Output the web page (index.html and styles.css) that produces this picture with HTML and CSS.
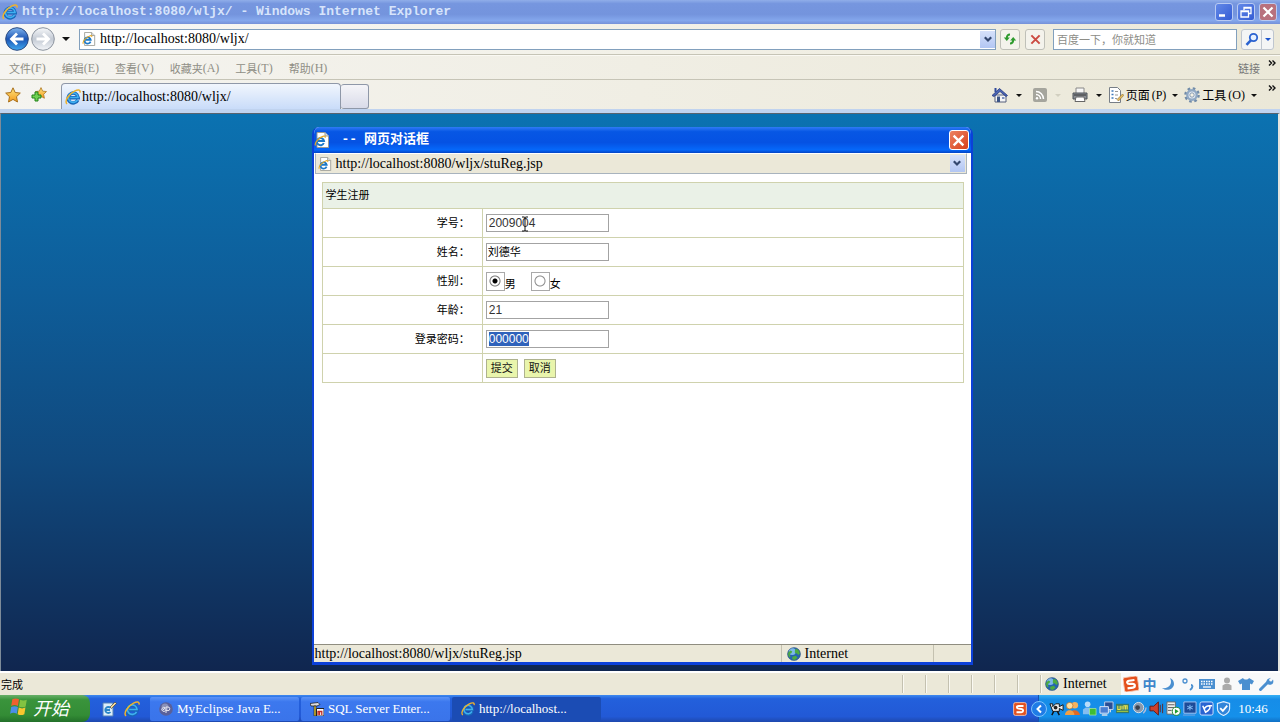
FILE: index.html
```html
<!DOCTYPE html>
<html lang="zh-CN">
<head>
<meta charset="utf-8">
<title>http://localhost:8080/wljx/ - Windows Internet Explorer</title>
<link rel="stylesheet" href="styles.css">
</head>
<body>
<svg class="defs" aria-hidden="true">
  <defs>
    <linearGradient id="gBlue" x1="0" y1="0" x2="0" y2="1"><stop offset="0" stop-color="#7fb4ee"/><stop offset=".5" stop-color="#1c55b4"/><stop offset="1" stop-color="#3fa8f0"/></linearGradient>
    <linearGradient id="gGrey" x1="0" y1="0" x2="0" y2="1"><stop offset="0" stop-color="#f6f8fa"/><stop offset=".5" stop-color="#c3cad4"/><stop offset="1" stop-color="#f4f6f9"/></linearGradient>
    <linearGradient id="gStar" x1="0" y1="0" x2="0" y2="1"><stop offset="0" stop-color="#ffe680"/><stop offset="1" stop-color="#f39a1c"/></linearGradient>
    <symbol id="ie" viewBox="0 0 16 16">
      <path d="M12.800 11A5 5 0 1 1 13.200 8.700H5" fill="none" stroke="#1766b8" stroke-width="3.400"/>
      <path d="M12.500 10.800A4.800 4.800 0 1 1 13 8.500H5.200" fill="none" stroke="#3fb0f0" stroke-width="1.700"/>
      <path d="M2 15C-1 12 4 5 9.500 2.200C13 .4 15.600.5 15 3.600" fill="none" stroke="#eeb22c" stroke-width="1.500"/>
    </symbol>
    <symbol id="iepage" viewBox="0 0 16 16">
      <path d="M3 .5h8l3.500 3.500v11.500H3z" fill="#fff" stroke="#9b9b94"/><path d="M11 .5V4h3.500" fill="#ddd" stroke="#9b9b94"/>
      <path d="M9.800 11A3.600 3.600 0 1 1 10 9H4" fill="none" stroke="#1b79c9" stroke-width="2"/>
      <path d="M1.500 13.500C0 11 5 5.500 9.500 4.200c1.500-.4 2 .4 1.500 1.500" fill="none" stroke="#e8a820" stroke-width="1.200"/>
    </symbol>
    <symbol id="globe" viewBox="0 0 16 16">
      <circle cx="8" cy="8" r="7.500" fill="#2564b0"/><circle cx="6" cy="5" r="4" fill="#7cb8ea"/>
      <path d="M1.500 6L4 4l2 1-1 2-2 1 1 3-1 1C1 10 .5 8 1.500 6zM10 2l3 1 2 4-2 2-2-2-2 0 0-3zM6 11l4-1 2 2-3 3-3-1z" fill="#4cab42"/>
      <circle cx="8" cy="8" r="7.300" fill="none" stroke="#3d5c80" stroke-width=".7"/>
    </symbol>
    <symbol id="sogou" viewBox="0 0 16 16">
      <rect x=".7" y=".7" width="14.600" height="14.600" rx="2" fill="#e4501e" stroke="#f6c9b4"/>
      <path d="M12 4.500H6.500C3.500 4.500 4 7.300 6.500 7.600l3 .4c3 .4 2.500 3.800 0 3.800H4" fill="none" stroke="#fff" stroke-width="2.200"/>
    </symbol>
    <symbol id="down" viewBox="0 0 8 4"><path d="M0 0h8L4 4z"/></symbol>
    <symbol id="chev" viewBox="0 0 8 7"><path d="M.8 1.200L4 4.500l3.200-3.300" fill="none" stroke="#33476e" stroke-width="2.200"/></symbol>
    <symbol id="more" viewBox="0 0 8 6"><path d="M1 .5L3.500 3 1 5.500M4.500.5L7 3 4.500 5.500" fill="none" stroke="#111" stroke-width="1.400"/></symbol>
    <symbol id="cross" viewBox="0 0 12 12"><path d="M1.500 1.500l9 9M10.500 1.500l-9 9" fill="none" stroke="currentColor" stroke-width="2.200"/></symbol>
    <symbol id="star" viewBox="0 0 16 16"><path d="M8 .8l2.200 4.700 5.100.6-3.800 3.600 1 5.300L8 12.400 3.500 15l1-5.300L.7 6.100l5.100-.6z" fill="url(#gStar)" stroke="#a9701a"/></symbol>
  </defs>
</svg>

<header class="titlebar">
  <svg class="i16"><use href="#ie"/></svg>
  <h1 class="titlebar-text">http://localhost:8080/wljx/ - Windows Internet Explorer</h1>
  <button class="winbtn" aria-label="最小化"><svg viewBox="0 0 12 12"><path d="M1 9.500h6" stroke="#fff" stroke-width="2.500"/></svg></button>
  <button class="winbtn" aria-label="还原"><svg viewBox="0 0 12 12"><path d="M4 4V1.500h7V7.500H8.500M4 2h7M1 5h7.500v6H1zM1 5.500h7.500" fill="none" stroke="#fff" stroke-width="1.300"/></svg></button>
  <button class="winbtn winbtn-close" aria-label="关闭"><svg><use href="#cross"/></svg></button>
</header>

<nav class="addressrow">
  <div class="navbtns">
    <button class="plain" aria-label="后退"><svg viewBox="0 0 24 24"><circle cx="12" cy="12" r="11.300" fill="url(#gBlue)" stroke="#2c4a80"/><path d="M18.500 12H7M12 6.500L6.500 12l5.500 5.500" fill="none" stroke="#fff" stroke-width="2.800"/></svg></button>
    <button class="plain" aria-label="前进"><svg viewBox="0 0 24 24"><circle cx="12" cy="12" r="11.300" fill="url(#gGrey)" stroke="#8c949f"/><path d="M5.500 12H17M12 6.500l5.500 5.500-5.500 5.500" fill="none" stroke="#fff" stroke-width="2.800"/></svg></button>
    <svg class="arrow arrow-big"><use href="#down"/></svg>
  </div>
  <div class="addressbox">
    <svg class="i14"><use href="#iepage"/></svg>
    <input class="address" aria-label="地址" value="http://localhost:8080/wljx/">
    <button class="combo" aria-label="展开"><svg><use href="#chev"/></svg></button>
  </div>
  <button class="toolbtn" aria-label="刷新"><svg viewBox="0 0 14 14"><path d="M6.500 11.500" fill="none"/><path d="M7 2.500C5 2.500 3.800 3.500 3.800 6.500M7 11.500c2 0 3.200-1 3.200-4" fill="none" stroke="#2f9b2f" stroke-width="2"/><path d="M.8 5.500h6l-3 3.500zM7.200 8.500h6l-3-3.500z" fill="#2f9b2f"/></svg></button>
  <button class="toolbtn toolbtn-stop" aria-label="停止"><svg><use href="#cross"/></svg></button>
  <input class="search" aria-label="搜索" placeholder="百度一下，你就知道">
  <div class="searchbtns">
    <button class="plain" aria-label="搜索"><svg viewBox="0 0 14 14"><circle cx="8.500" cy="5.500" r="3.700" fill="#e6f0ff" stroke="#2a62d0" stroke-width="1.800"/><path d="M6 8.200L1.500 12.800" stroke="#2a62d0" stroke-width="2.600"/></svg></button>
    <button class="plain searchmore" aria-label="搜索选项"><svg class="arrow arrow-blue"><use href="#down"/></svg></button>
  </div>
</nav>

<nav class="menurow">
  <button class="menu">文件<span>(F)</span></button>
  <button class="menu">编辑<span>(E)</span></button>
  <button class="menu">查看<span>(V)</span></button>
  <button class="menu">收藏夹<span>(A)</span></button>
  <button class="menu">工具<span>(T)</span></button>
  <button class="menu">帮助<span>(H)</span></button>
  <span class="links">链接</span>
  <svg class="more"><use href="#more"/></svg>
</nav>

<nav class="tabrow">
  <div class="favs">
    <svg class="i16"><use href="#star"/></svg>
    <svg class="i16" viewBox="0 0 16 16"><g transform="translate(4 0) scale(.75)"><path d="M8 .8l2.200 4.700 5.100.6-3.800 3.600 1 5.300L8 12.400 3.500 15l1-5.300L.7 6.100l5.100-.6z" fill="url(#gStar)" stroke="#a9701a"/></g><path d="M4 5h3v3h3v3H7v3H4v-3H1V8h3z" fill="#6fd052" stroke="#23831b"/></svg>
  </div>
  <div class="tab"><svg class="i16"><use href="#ie"/></svg>http://localhost:8080/wljx/</div>
  <button class="newtab" aria-label="新选项卡"></button>
  <div class="tools">
    <svg class="i16" viewBox="0 0 16 16"><path d="M3 8h11v7H3z" fill="#f5f5f5" stroke="#555e7c"/><path d="M0 8.500L7.500 1.500l8 7-1.500 1-6-5-6 5z" fill="#4a64b4" stroke="#243a80" stroke-width=".8"/><path d="M2.500 1h2v4h-2z" fill="#304a9c"/><path d="M5 9.500h3V15H5z" fill="#3b5486"/><path d="M10 10h2.500v2H10z" fill="#7f93c0"/></svg>
    <svg class="arrow arrow-apart"><use href="#down"/></svg>
    <svg class="i14 rss" viewBox="0 0 14 14"><rect width="14" height="14" rx="2" fill="#a5a59d"/><path d="M3 6.500A4.500 4.500 0 0 1 7.500 11M3 3.500A7.500 7.500 0 0 1 10.500 11" fill="none" stroke="#fff" stroke-width="1.500"/><circle cx="4" cy="10.200" r="1.200" fill="#fff"/></svg>
    <svg class="arrow arrow-apart arrow-off"><use href="#down"/></svg>
    <svg class="i16 printer" viewBox="0 0 16 16"><path d="M4 1h8v6H4z" fill="#f7f7f7" stroke="#888"/><path d="M1 6h14v6H1z" fill="#8a8f96" stroke="#4d5259"/><path d="M2 8h12" stroke="#333"/><path d="M4 10h8l1 4.500H3z" fill="#fff" stroke="#666"/></svg>
    <svg class="arrow arrow-apart"><use href="#down"/></svg>
    <button class="tool"><svg class="i16" viewBox="0 0 16 16"><path d="M1.500.5h8l3 3v12h-11z" fill="#fff" stroke="#777e87"/><path d="M3.500 4h2M3.500 7.500h2M3.500 11h2" stroke="#3e78bb" stroke-width="1.600"/><path d="M7 4.500h3M7 8h3M7 11.500h2" stroke="#999"/><path d="M9 12.500L14.500 7l1.300 1.300L10.500 14z" fill="#e8bd5d" stroke="#81652c" stroke-width=".6"/></svg>页面<span>(P)</span></button>
    <svg class="arrow"><use href="#down"/></svg>
    <button class="tool"><svg class="i16" viewBox="0 0 16 16"><circle cx="8" cy="8" r="6.500" fill="none" stroke="#718ba8" stroke-width="2.600" stroke-dasharray="2.550 2.550"/><circle cx="8" cy="8" r="4.700" fill="#e8eef5" stroke="#91a9c4" stroke-width="2.400"/><circle cx="8" cy="8" r="2.200" fill="#f4f2e6" stroke="#6d87a6" stroke-width=".8"/></svg>工具<span>(O)</span></button>
    <svg class="arrow"><use href="#down"/></svg>
  </div>
  <svg class="more"><use href="#more"/></svg>
</nav>

<main class="page">
  <section class="dialog" aria-label="网页对话框">
    <div class="dialog-title">
      <svg class="i16"><use href="#iepage"/></svg>
      <h2><span>--</span>网页对话框</h2>
      <button class="dialog-close" aria-label="关闭"><svg><use href="#cross"/></svg></button>
    </div>
    <div class="dialog-address">
      <svg class="i14"><use href="#iepage"/></svg>
      <span>http://localhost:8080/wljx/stuReg.jsp</span>
      <button class="combo" aria-label="展开"><svg><use href="#chev"/></svg></button>
    </div>
    <form class="dialog-body">
      <table class="reg">
        <colgroup><col class="col-lab"><col></colgroup>
        <thead><tr><th colspan="2">学生注册</th></tr></thead>
        <tbody>
          <tr><td class="lab"><label for="sno">学号：</label></td><td class="val"><div class="field"><input class="text" id="sno" value="2009004"><svg class="ibeam" viewBox="0 0 8 16"><path d="M1 1h2.500l.5.500.5-.5H7M4 1v14M1 15h2.500l.5-.5.5.5H7" fill="none" stroke="#111"/></svg></div></td></tr>
          <tr><td class="lab"><label for="sname">姓名：</label></td><td class="val"><input class="text cjk" id="sname" value="刘德华"></td></tr>
          <tr><td class="lab">性别：</td><td class="val"><div class="radios"><label><input type="radio" name="sex" checked><span>男</span></label><label><input type="radio" name="sex"><span>女</span></label></div></td></tr>
          <tr><td class="lab"><label for="age">年龄：</label></td><td class="val"><input class="text" id="age" value="21"></td></tr>
          <tr><td class="lab"><label for="pwd">登录密码：</label></td><td class="val"><input class="text" id="pwd" value="000000"></td></tr>
          <tr><td class="lab"></td><td class="val"><div class="actions"><button type="button">提交</button><button type="button">取消</button></div></td></tr>
        </tbody>
      </table>
    </form>
    <footer class="dialog-status">
      <span class="grow">http://localhost:8080/wljx/stuReg.jsp</span>
      <span class="zone"><svg class="i14"><use href="#globe"/></svg>Internet</span>
      <span class="grip"></span>
    </footer>
  </section>
</main>

<footer class="status">
  <span class="done">完成</span>
  <span class="cell"></span><span class="cell"></span><span class="cell"></span><span class="cell"></span><span class="cell"></span><span class="cell"></span>
  <span class="cell cell-zone"><svg class="i14"><use href="#globe"/></svg>Internet</span>
  <div class="ime">
    <svg viewBox="0 0 16 16"><g transform="rotate(-8 8 8)"><use href="#sogou" width="16" height="16"/></g></svg>
    <span class="zh">中</span>
    <svg viewBox="0 0 16 16"><path d="M10 2c3 6-1 11-8 10 5 4 12 1 12-4 0-3-1.500-5-4-6z" fill="#4a8fd0"/></svg>
    <svg viewBox="0 0 16 16"><circle cx="5" cy="5" r="2" fill="none" stroke="#4a8fd0" stroke-width="1.300"/><path d="M11 9c2 0 2 3-1 5" fill="none" stroke="#4a8fd0" stroke-width="2"/></svg>
    <svg viewBox="0 0 16 16"><path d="M0 3h16v10H0z" fill="#4a8fd0"/><path d="M2 5.500h12M2 8h12" stroke="#fff" stroke-width="1.300" stroke-dasharray="1.500 1"/><path d="M4 11h8" stroke="#fff" stroke-width="1.300"/></svg>
    <svg viewBox="0 0 16 16"><circle cx="8" cy="4.500" r="3" fill="#aaa"/><path d="M3.500 14V9.500L6 8h4l2.500 1.500V14z" fill="#aaa"/></svg>
    <svg viewBox="0 0 16 16"><path d="M5 2c1 2 5 2 6 0l5 3-2 3.500-2-1V14H4V7.500l-2 1L0 5z" fill="#4a8fd0"/></svg>
    <svg viewBox="0 0 16 16"><path d="M2.500 13.500L10 6" stroke="#4a8fd0" stroke-width="3" stroke-linecap="round"/><path d="M13 1.800l-2 2 .8 1.400 1.600.4 1.600-2c1.400 4-1.500 6-4.500 5C7.800 7.500 7 3 13 1.800z" fill="#4a8fd0"/></svg>
  </div>
</footer>

<footer class="taskbar">
  <button class="start"><svg viewBox="0 0 18 18"><path d="M3 2c2-1 4-1 6 0L8 8C6 7 4 7 2 8z" fill="#ee6030"/><path d="M10 2.500c2 1 4 1 6 0l-1 6c-2 1-4 1-6 0z" fill="#82c341"/><path d="M2 9c2-1 4-1 6 0l-1 6c-2-1-4-1-6 0z" fill="#4b8fe8"/><path d="M8.800 9.500c2 1 4 1 6 0l-1 6c-2 1-4 1-6 0z" fill="#f8c62e"/></svg><span>开始</span></button>
  <div class="quick">
    <svg class="i16" viewBox="0 0 16 16"><path d="M2 2h10v13H2z" fill="#dceefa" stroke="#5681b5"/><path d="M9.500 7a3 3 0 1 0 0 4M5 9h4" fill="none" stroke="#2b86c8" stroke-width="1.800"/><path d="M9 6l5-5 1.500 1.500-5 5z" fill="#f4d798" stroke="#333" stroke-width=".6"/></svg>
    <svg class="i16"><use href="#ie"/></svg>
  </div>
  <button class="task"><svg class="i14" viewBox="0 0 14 14"><circle cx="7" cy="7" r="6.800" fill="#59609a"/><circle cx="6" cy="5" r="3.500" fill="#8b91b8"/><path d="M6.500 8.500a2 2 0 1 1-.5-2.700L4 8M7 11V5h2a1.800 1.800 0 0 1 0 3.600H7" fill="none" stroke="#e9e9f4"/></svg>MyEclipse Java E...</button>
  <button class="task"><svg class="i14" viewBox="0 0 14 14"><path d="M0 1.500L8 .5l2 2-3 1.500H1z" fill="#ddd" stroke="#111" stroke-width=".7"/><path d="M4 4h2v10H4z" fill="#e9c934" stroke="#111" stroke-width=".6"/><path d="M6.500 6.500H14V14H6.500z" fill="#fff" stroke="#222"/><path d="M8 13V9.500h1.500V13M9.500 9.500h2.300V13" fill="none" stroke="#c22b25" stroke-width="1.300"/></svg>SQL Server Enter...</button>
  <button class="task task-on"><svg class="i14"><use href="#ie"/></svg>http://localhost...</button>
  <div class="spring"></div>
  <svg class="i14 traysogou"><use href="#sogou"/></svg>
  <div class="tray">
    <svg class="expander" viewBox="0 0 16 16"><circle cx="8" cy="8" r="7.500" fill="#1f7ce6" stroke="#7cc2fa"/><path d="M10 4.500L6.500 8l3.500 3.500" fill="none" stroke="#fff" stroke-width="2"/></svg>
    <svg viewBox="0 0 16 16"><path d="M1 3h3v3l3-3h4v3l4-2v6l-4-2v3H4z" fill="#eee" stroke="#111"/><circle cx="7" cy="7" r="2" fill="#222"/><path d="M5 11l-2 4M9 11l2 4" stroke="#111" stroke-width="1.500"/></svg>
    <svg viewBox="0 0 16 16"><circle cx="10.500" cy="4.500" r="3.500" fill="#f4b35f"/><path d="M5 15c0-7 10-7 11 0z" fill="#e06a25"/><circle cx="5" cy="5" r="3.500" fill="#ffdf9e" stroke="#b86820" stroke-width=".7"/><path d="M0 15c0-7 10-7 10 0z" fill="#f2a044"/></svg>
    <svg viewBox="0 0 16 16"><circle cx="6" cy="3.500" r="3" fill="#b8dcfa"/><path d="M1 14V9l3-2h4l3 2v5z" fill="#85bdf0"/><path d="M8 8h7v7H8z" fill="#3fbd35" stroke="#b0eba8" stroke-width=".7"/></svg>
    <svg viewBox="0 0 16 16"><path d="M6 1h9v8H6z" fill="#294e95" stroke="#c2d2eb"/><path d="M1 6h9v7H1z" fill="#4a7fd2" stroke="#e3ebf7"/><path d="M3 15h6M12 9v3" stroke="#d8e0ea" stroke-width="1.500"/></svg>
    <svg viewBox="0 0 16 16"><path d="M1 3h14v10H1z" fill="#35796b"/><path d="M3 5v4h2.500V5M7.500 9V5M9.500 9V5h3.500v4M11.300 5v4" fill="none" stroke="#f0e64a" stroke-width="1.200"/><path d="M2 11h12" stroke="#b8d63c"/></svg>
    <svg viewBox="0 0 16 16"><circle cx="7" cy="7" r="5.500" fill="#8999ad" stroke="#dbe4ec"/><circle cx="6" cy="7" r="2.500" fill="#39414f"/><path d="M12 13c2-2 3-4 3-6" fill="none" stroke="#aebddd" stroke-width="1.500"/></svg>
    <svg viewBox="0 0 16 16"><path d="M1 5.500h4L10 1v14l-5-4.500H1z" fill="#cc412d" stroke="#621b16"/><path d="M12 4v8M14.500 3v10" stroke="#632828"/></svg>
    <svg viewBox="0 0 16 16"><path d="M1 1h9v13H1z" fill="#eee" stroke="#666"/><path d="M2 4h7M2 7h7M2 10h4" stroke="#555"/><circle cx="11" cy="11" r="4.300" fill="#fff" stroke="#218a30"/><path d="M9.500 8.500v5L13.500 11z" fill="#229a30"/></svg>
    <svg viewBox="0 0 16 16"><path d="M2 1h13v12H2z" fill="#1c4b98" stroke="#a9c7f5"/><path d="M8.500 4v6M5.500 5.500l6 3M11.500 5.500l-6 3" stroke="#8cc6ff"/><path d="M1 15h13" stroke="#7fa5de"/></svg>
    <svg viewBox="0 0 16 16"><rect x="1" y="1" width="14" height="14" rx="2" fill="#2964d2" stroke="#d2e2ff"/><path d="M4 5l3 7c4-2 6-5 4-7-2 0-4 1-5 3M10 5h4" fill="none" stroke="#fff" stroke-width="1.600"/></svg>
    <svg viewBox="0 0 16 16"><path d="M8 .7l6.500 2V8c0 4-3 6-6.500 7.500C4.500 14 1.500 12 1.500 8V2.700z" fill="#3285d9" stroke="#dceeff" stroke-width="1.200"/><path d="M4.500 7.500L7.300 10.500 12 5" fill="none" stroke="#fff" stroke-width="1.900"/></svg>
    <time class="clock">10:46</time>
  </div>
</footer>
<script src="select.js"></script>
</body>
</html>
```
FILE: styles.css
```css
* { box-sizing: border-box; }
body {
  margin: 0;
  min-height: 100vh;
  display: flex;
  flex-direction: column;
  background: #ebe8d8;
  color: #000;
  font: 14px/16px "Liberation Serif", "Noto Sans CJK SC", serif;
  overflow: hidden;
}
button, input { font: inherit; color: inherit; margin: 0; padding: 0; border: 0; background: none; border-radius: 0; }
h1, h2 { margin: 0; font-size: inherit; }
svg { display: block; flex: none; }
.defs { position: absolute; width: 0; height: 0; }
.i16 { width: 16px; height: 16px; }
.i14 { width: 14px; height: 14px; }
.arrow { width: 6px; height: 3px; fill: #111; }
.arrow-big { width: 8px; height: 4px; }
.arrow-off { fill: #d2cfc0; }
.arrow-blue { fill: #1d55cc; }
.plain { display: grid; place-items: center; }

.titlebar {
  display: flex;
  align-items: center;
  gap: 4px;
  height: 24px;
  padding: 0 3px 0 2px;
  background: linear-gradient(#90aee9 0, #7696df 15%, #7494dd 60%, #84a7ec 85%, #7591d8);
}
.titlebar-text { flex: 1; color: #d7e4fb; font: bold 13px/16px "Liberation Mono", monospace; }
.winbtn {
  display: grid;
  place-items: center;
  width: 18px;
  height: 18px;
  border: 1px solid #b8caf3;
  border-radius: 3px;
  background: linear-gradient(135deg, #6389e8, #345cd4);
  color: #fff;
}
.winbtn svg { width: 12px; height: 12px; }
.winbtn-close { background: #b8717d; }

.addressrow {
  display: flex;
  align-items: center;
  gap: 4px;
  height: 31px;
  padding: 0 6px 0 5px;
  border-bottom: 1px solid #c6c4b6;
  background: linear-gradient(to right, #f8f8f6, #ece9d9);
}
.navbtns { display: flex; align-items: center; gap: 2px; width: 70px; }
.navbtns button svg { width: 24px; height: 24px; }
.navbtns .arrow { margin-left: 5px; }
.addressbox {
  flex: 1;
  display: flex;
  align-items: center;
  gap: 4px;
  height: 21px;
  padding: 1px 0 1px 2px;
  border: 1px solid #82a0bd;
  background: #fff;
}
.address { flex: 1; min-width: 0; }
.combo { display: grid; place-items: center; align-self: stretch; width: 15px; background: linear-gradient(#d6e1fa, #b2c6f3); }
.combo svg { width: 8px; height: 7px; }
.toolbtn {
  display: grid;
  place-items: center;
  width: 20px;
  height: 21px;
  border: 1px solid #bfc0b8;
  border-radius: 3px;
  background: #f4f3ec;
}
.toolbtn svg { width: 14px; height: 14px; }
.toolbtn-stop { margin-left: 1px; color: #cc4b42; }
.toolbtn-stop svg { width: 11px; height: 11px; }
.search {
  width: 184px;
  height: 21px;
  margin-left: 4px;
  padding: 0 3px;
  border: 1px solid #82a0bd;
  background: #fff;
  font: 11px/16px "Noto Sans CJK SC", sans-serif;
}
.search::placeholder { color: #8d8d87; opacity: 1; }
.searchbtns { display: flex; height: 21px; border: 1px solid #bfc6cf; border-radius: 3px; background: #f4f5f5; }
.searchbtns button { width: 19px; }
.searchbtns svg:not(.arrow) { width: 14px; height: 14px; }
.searchbtns .searchmore { width: 12px; border-left: 1px solid #bfc6cf; }

.menurow {
  display: flex;
  align-items: center;
  gap: 16px;
  height: 25px;
  padding: 0 4px 0 9px;
  border-top: 1px solid #faf9f3;
  border-bottom: 1px solid #c6c4b6;
  background: linear-gradient(to right, #f5f4f0, #ebe8d8);
}
.menu, .links, .tool { display: flex; align-items: center; font: 11px/16px "Noto Sans CJK SC", sans-serif; }
.menu, .links { color: #8f8e85; }
.menu span, .tool span { font: 12px/16px "Liberation Serif", serif; }
.links { margin-left: auto; color: #777; }
.more { width: 8px; height: 6px; align-self: flex-start; margin-top: 4px; }
.menurow .more { margin-left: -8px; }

.tabrow {
  display: flex;
  align-items: flex-end;
  height: 33px;
  padding-right: 4px;
  border-bottom: 4px solid #c0d3ef;
  background: linear-gradient(to right, #f5f4f0, #ebe8d8);
}
.favs { display: flex; gap: 10px; align-self: center; width: 61px; padding-left: 5px; }
.tab {
  display: flex;
  align-items: center;
  gap: 1px;
  width: 280px;
  height: 26px;
  padding: 0 3px;
  border: 1px solid #8f98a8;
  border-bottom: 0;
  border-radius: 4px 4px 0 0;
  background: linear-gradient(#f1f6fd, #c9dcf9);
}
.newtab { width: 28px; height: 25px; border: 1px solid #8f98a8; border-left: 0; border-radius: 3px; background: linear-gradient(#f5f5f8, #d9dbe9); }
.tools { display: flex; align-items: center; align-self: center; gap: 6px; margin: 1px 11px 0 auto; }
.rss, .printer { margin-left: 5px; }
.arrow-apart { margin-left: 2px; }
.tool { gap: 2px; font-size: 12px; }
.tabrow .more { margin-top: 5px; }

.page {
  flex: 1;
  display: flex;
  justify-content: center;
  padding: 13px 0 6px 5px;
  border-left: 1px solid #7d8b99;
  border-right: 2px solid #e4e4de;
  border-top: 1px solid #59636e;
  background: linear-gradient(#0b72b1, #0e5d99 32%, #10497e 62%, #10264f);
}
.dialog {
  display: flex;
  flex-direction: column;
  width: 100%;
  max-width: 661px;
  border: 2px solid #0c40d8;
  border-top: 0;
  border-bottom-width: 3px;
  border-radius: 7px 7px 0 0;
  background: #fff;
  overflow: hidden;
}
.dialog-title {
  display: flex;
  align-items: center;
  gap: 12px;
  height: 26px;
  padding: 0 2px 0 0;
  background: linear-gradient(#2f7bf5 0, #0757e4 18%, #0552e3 60%, #0568fa 88%, #0344c4);
  color: #fff;
}
.dialog-title h2 { flex: 1; display: flex; gap: 7px; font: bold 13px/16px "Liberation Mono", "Noto Sans CJK SC", monospace; }
.dialog-close {
  display: grid;
  place-items: center;
  width: 20px;
  height: 20px;
  border: 1px solid #fff;
  border-radius: 3px;
  background: linear-gradient(135deg, #ec8362, #d8401b);
}
.dialog-close svg { width: 13px; height: 13px; }
.dialog-address {
  display: flex;
  align-items: center;
  gap: 4px;
  height: 21px;
  margin: 0 4px 0 1px;
  padding: 1px 1px 1px 2px;
  border: 1px solid #a8b3bd;
  border-top-color: #fff;
  background: #ebe8d8;
}
.dialog-address span { flex: 1; }
.dialog-body { flex: 1; padding: 8px 7px 0 8px; font: 11px/16px "Noto Sans CJK SC", sans-serif; }
.reg { width: 100%; border-collapse: collapse; table-layout: fixed; }
.col-lab { width: 25%; }
.reg th, .reg td { height: 29px; border: 1px solid #cfd2ad; padding: 0 3px; }
.reg th { height: 26px; padding-bottom: 3px; background: #eaf1e7; font-weight: normal; text-align: left; }
.reg .lab { padding: 0 12px 2px 0; text-align: right; }
.text {
  display: block;
  width: 123px;
  height: 18px;
  padding: 0 2px;
  border: 1px solid #a3a3a3;
  color: #333;
  font: 12px/16px "Liberation Sans", sans-serif;
  caret-color: transparent;
  outline: 0;
}
.text::selection { background: #2f62bb; color: #fff; }
.cjk { padding: 0 1px 2px; color: #000; font: 11px/14px "Noto Sans CJK SC", sans-serif; }
.field { position: relative; width: 123px; }
.ibeam { position: absolute; left: 35px; top: 2px; width: 8px; height: 16px; }
.radios { display: flex; gap: 15px; }
.radios label { display: flex; align-items: flex-end; height: 19px; }
.radios span { line-height: 15px; }
.radios input {
  appearance: none;
  width: 19px;
  height: 19px;
  border: 1px solid #a9a9a9;
  background: radial-gradient(circle at 8px 8px, transparent 4px, #8a8a8a 5px, transparent 6px), #fff;
}
.radios input:checked {
  background: radial-gradient(circle at 8px 8px, #000 2px, transparent 3px, transparent 4px, #777 5px, transparent 6px), #fff;
}
.actions { display: flex; gap: 6px; }
.actions button { width: 32px; height: 19px; padding-bottom: 2px; border: 1px solid #aeb28e; background: #e9f5ac; color: #111; line-height: 14px; }
.dialog-status { display: flex; align-items: stretch; height: 18px; border-top: 1px solid #8f8d80; background: #ebe8d8; line-height: 18px; }
.grow { flex: 1; padding-left: 1px; }
.zone { display: flex; align-items: center; gap: 4px; width: 152px; padding-left: 5px; border-left: 1px solid #c4c1b0; }
.grip { width: 38px; border-left: 1px solid #c4c1b0; }

.status { display: flex; align-items: stretch; height: 24px; border-top: 2px solid #fff; background: #ebe8d8; }
.done { flex: 1; padding: 3px 0 0 1px; font: 11px/16px "Noto Sans CJK SC", sans-serif; }
.cell { width: 23px; margin: 2px 0; border-left: 1px solid #c4c1b0; box-shadow: inset 1px 0 #faf9f2; }
.cell-zone { display: flex; align-items: center; gap: 4px; width: 81px; padding-left: 4px; }
.ime { display: flex; align-items: center; justify-content: space-between; width: 159px; padding: 0 6px 0 2px; background: #f8f9fa; }
.ime svg { width: 16px; height: 16px; }
.zh { color: #3f86cb; font: bold 14px/16px "Noto Sans CJK SC", sans-serif; }

.taskbar {
  display: flex;
  align-items: stretch;
  gap: 2px;
  height: 27px;
  background: linear-gradient(#3e8af0 0, #2360dc 14%, #2259d6 80%, #1e48ad);
  color: #fff;
  font-size: 13px;
}
.start {
  display: flex;
  align-items: center;
  gap: 4px;
  width: 90px;
  padding: 0 0 3px 9px;
  border-radius: 0 8px 8px 0;
  background: linear-gradient(#68b068 0, #3a943c 18%, #338c35 75%, #23702a);
  font: italic 18px/22px "Noto Sans CJK SC", sans-serif;
}
.start svg { width: 20px; height: 20px; }
.quick { display: flex; align-items: center; gap: 7px; width: 56px; padding-left: 9px; }
.task {
  display: flex;
  align-items: center;
  gap: 4px;
  width: 149px;
  margin: 2px 0 1px;
  padding-left: 9px;
  border-radius: 2px;
  background: linear-gradient(#5a93f8, #3c78ee 20%, #3a74ea);
  white-space: nowrap;
}
.task-on { background: #1b4cb4; }
.spring { flex: 1; }
.traysogou { align-self: center; margin-right: 9px; }
.tray {
  display: flex;
  align-items: center;
  justify-content: space-between;
  width: 242px;
  padding-right: 12px;
  border-left: 1px solid #1452b0;
  background: linear-gradient(#35b0f5 0, #168de8 16%, #1590ea 80%, #1170c4);
}
.tray svg { width: 15px; height: 15px; }
.tray .expander { width: 16px; height: 16px; margin-left: -8px; }
.clock { margin-left: 6px; }
```
FILE: select.js
```js
const pwd = document.getElementById("pwd");
pwd.focus({ preventScroll: true });
pwd.select();
```
